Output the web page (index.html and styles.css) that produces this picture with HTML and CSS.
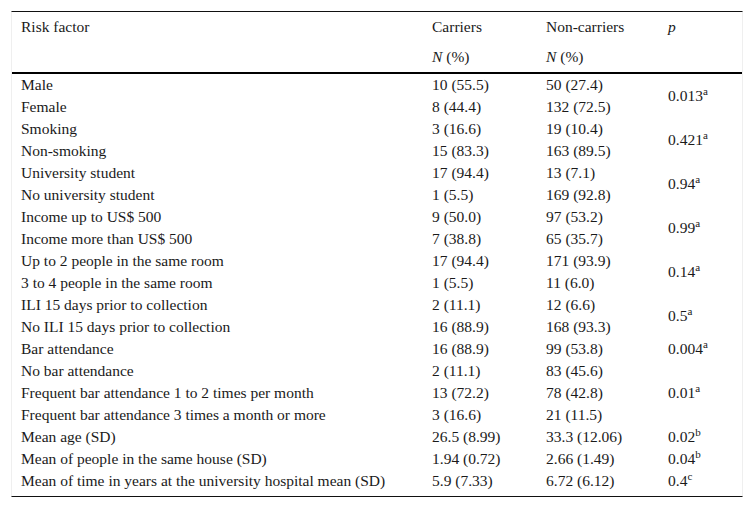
FILE: index.html
```html
<!DOCTYPE html>
<html>
<head>
<meta charset="utf-8">
<link rel="stylesheet" href="styles.css">
</head>
<body>
<div class="frame">
<table class="tbl">
<colgroup>
<col class="c1"><col class="c2"><col class="c3"><col class="c4">
</colgroup>
<thead>
<tr class="h1"><th>Risk factor</th><th>Carriers</th><th>Non-carriers</th><th><i>p</i></th></tr>
<tr class="h2"><th></th><th><i>N</i> (%)</th><th><i>N</i> (%)</th><th></th></tr>
</thead>
<tbody>
<tr><td>Male</td><td>10 (55.5)</td><td>50 (27.4)</td><td rowspan="2">0.013<sup>a</sup></td></tr>
<tr><td>Female</td><td>8 (44.4)</td><td>132 (72.5)</td></tr>
<tr><td>Smoking</td><td>3 (16.6)</td><td>19 (10.4)</td><td rowspan="2">0.421<sup>a</sup></td></tr>
<tr><td>Non-smoking</td><td>15 (83.3)</td><td>163 (89.5)</td></tr>
<tr><td>University student</td><td>17 (94.4)</td><td>13 (7.1)</td><td rowspan="2">0.94<sup>a</sup></td></tr>
<tr><td>No university student</td><td>1 (5.5)</td><td>169 (92.8)</td></tr>
<tr><td>Income up to US$ 500</td><td>9 (50.0)</td><td>97 (53.2)</td><td rowspan="2">0.99<sup>a</sup></td></tr>
<tr><td>Income more than US$ 500</td><td>7 (38.8)</td><td>65 (35.7)</td></tr>
<tr><td>Up to 2 people in the same room</td><td>17 (94.4)</td><td>171 (93.9)</td><td rowspan="2">0.14<sup>a</sup></td></tr>
<tr><td>3 to 4 people in the same room</td><td>1 (5.5)</td><td>11 (6.0)</td></tr>
<tr><td>ILI 15 days prior to collection</td><td>2 (11.1)</td><td>12 (6.6)</td><td rowspan="2">0.5<sup>a</sup></td></tr>
<tr><td>No ILI 15 days prior to collection</td><td>16 (88.9)</td><td>168 (93.3)</td></tr>
<tr><td>Bar attendance</td><td>16 (88.9)</td><td>99 (53.8)</td><td>0.004<sup>a</sup></td></tr>
<tr><td>No bar attendance</td><td>2 (11.1)</td><td>83 (45.6)</td><td></td></tr>
<tr><td>Frequent bar attendance 1 to 2 times per month</td><td>13 (72.2)</td><td>78 (42.8)</td><td>0.01<sup>a</sup></td></tr>
<tr><td>Frequent bar attendance 3 times a month or more</td><td>3 (16.6)</td><td>21 (11.5)</td><td></td></tr>
<tr><td>Mean age (SD)</td><td>26.5 (8.99)</td><td>33.3 (12.06)</td><td>0.02<sup>b</sup></td></tr>
<tr><td>Mean of people in the same house (SD)</td><td>1.94 (0.72)</td><td>2.66 (1.49)</td><td>0.04<sup>b</sup></td></tr>
<tr><td>Mean of time in years at the university hospital mean (SD)</td><td>5.9 (7.33)</td><td>6.72 (6.12)</td><td>0.4<sup>c</sup></td></tr>
</tbody>
</table>
</div>
</body>
</html>
```

FILE: styles.css
```css
html, body {
  margin: 0;
  padding: 0;
  background: #fff;
}
body {
  font-family: "Liberation Serif", "Times New Roman", serif;
  font-size: 15.5px;
  color: #1a1a1a;
}
.frame {
  margin: 11px 0 0 11px;
  width: 730px;
  border-top: 1px solid #111;
  border-bottom: 1px solid #111;
  border-left: 1px solid #efefef;
  border-right: 1px solid #efefef;
  padding-bottom: 4px;
}
.tbl {
  width: 100%;
  border-collapse: collapse;
  table-layout: fixed;
}
.c1 { width: 410px; }
.c2 { width: 114px; }
.c3 { width: 122px; }
.c4 { width: auto; }
.tbl th, .tbl td {
  padding: 0 0 0 10px;
  text-align: left;
  font-weight: normal;
  vertical-align: middle;
  white-space: nowrap;
  line-height: 18px;
}
.tbl th:first-child, .tbl td:first-child {
  padding-left: 9px;
}
.h1 th, .h2 th {
  height: 30px;
}
.h2 th {
  border-bottom: 2px solid #000;
}
.tbl tbody td {
  height: 22px;
}
sup {
  font-size: 11px;
  line-height: 0;
  vertical-align: 6px;
}
```
